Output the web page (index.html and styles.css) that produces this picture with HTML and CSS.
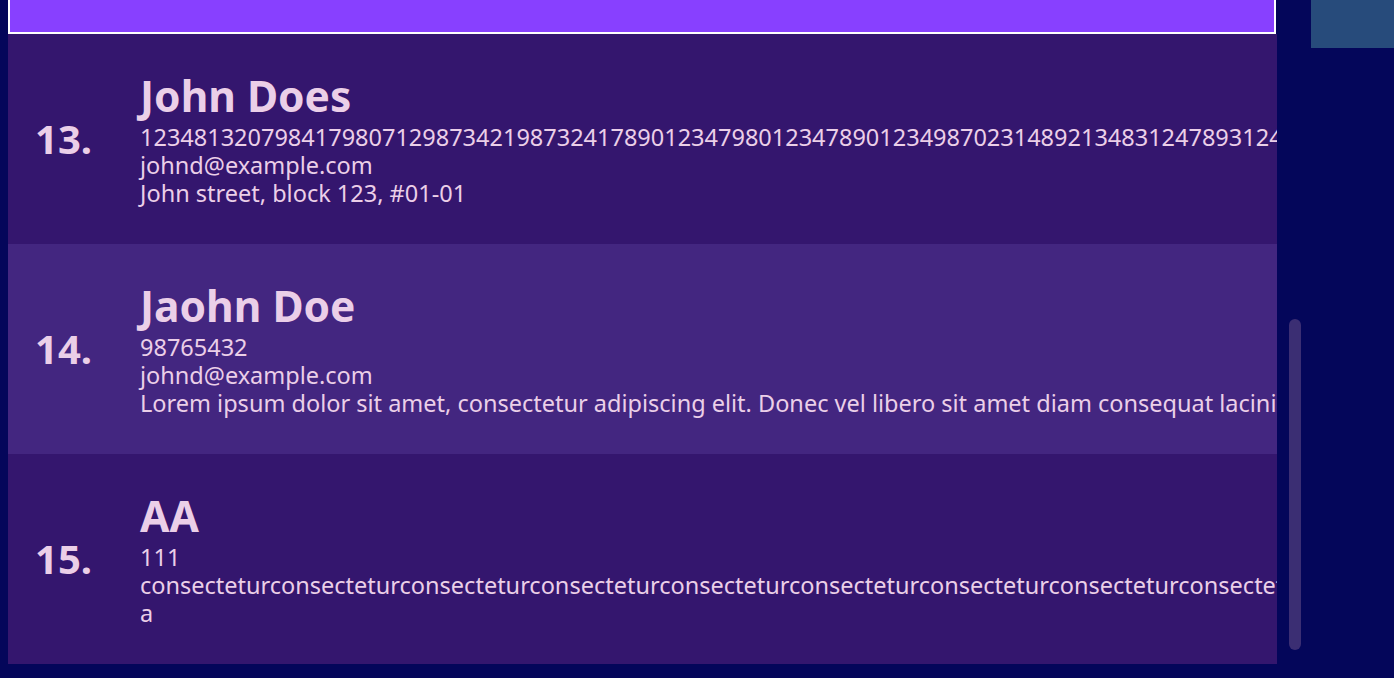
FILE: index.html
```html
<!DOCTYPE html>
<html>
<head>
<meta charset="utf-8">
<link rel="stylesheet" href="styles.css">
</head>
<body>
<div class="app">
  <div class="list">
    <div class="cell-selected"></div>
    <div class="card card-odd">
      <div class="index">13.</div>
      <div class="info">
        <div class="name">John Does</div>
        <div class="detail">1234813207984179807129873421987324178901234798012347890123498702314892134831247893124978012347890123</div>
        <div class="detail">johnd@example.com</div>
        <div class="detail">John street, block 123, #01-01</div>
      </div>
    </div>
    <div class="card card-even">
      <div class="index">14.</div>
      <div class="info">
        <div class="name">Jaohn Doe</div>
        <div class="detail">98765432</div>
        <div class="detail">johnd@example.com</div>
        <div class="detail">Lorem ipsum dolor sit amet, consectetur adipiscing elit. Donec vel libero sit amet diam consequat lacinia.</div>
      </div>
    </div>
    <div class="card card-odd">
      <div class="index">15.</div>
      <div class="info">
        <div class="name">AA</div>
        <div class="detail">111</div>
        <div class="detail">consecteturconsecteturconsecteturconsecteturconsecteturconsecteturconsecteturconsecteturconsecteturconsectetur</div>
        <div class="detail">a</div>
      </div>
    </div>
  </div>
  <div class="track">
    <div class="thumb"></div>
  </div>
  <div class="side">
    <div class="side-box"></div>
  </div>
</div>
</body>
</html>
```
FILE: styles.css
```css
html, body {
  margin: 0;
  padding: 0;
}
body {
  background: #04065a;
  font-family: "Noto Sans", "Open Sans", sans-serif;
  color: #ebcfe8;
  overflow: hidden;
}
.app {
  display: flex;
  height: 678px;
}
.list {
  margin-left: 8px;
  width: 1269px;
  height: 664px;
  overflow: hidden;
  display: flex;
  flex-direction: column;
  flex-shrink: 0;
}
.cell-selected {
  box-sizing: border-box;
  width: 1268px;
  height: 34px;
  flex-shrink: 0;
  background: #8840ff;
  border: 2px solid #ffffff;
  border-top: none;
}
.card {
  height: 210px;
  flex-shrink: 0;
  display: flex;
  align-items: center;
  padding-left: 27px;
  white-space: nowrap;
}
.card-odd {
  background: #34166e;
}
.card-even {
  background: #432680;
}
.index {
  width: 105px;
  flex-shrink: 0;
  font-size: 40px;
  font-weight: 700;
  line-height: 48px;
}
.info {
  display: flex;
  flex-direction: column;
  min-width: 0;
}
.name {
  font-size: 42.5px;
  font-weight: 700;
  line-height: 48px;
  margin-bottom: 3px;
}
.detail {
  font-size: 23.5px;
  line-height: 28px;
}
.track {
  width: 34px;
  flex-shrink: 0;
  display: flex;
  flex-direction: column;
}
.thumb {
  margin-top: 319px;
  margin-left: 12px;
  width: 12px;
  height: 331px;
  border-radius: 6px;
  background: #3b2e73;
}
.side {
  flex: 1;
  display: flex;
  flex-direction: column;
}
.side-box {
  height: 48px;
  background: #274b7b;
}
```
